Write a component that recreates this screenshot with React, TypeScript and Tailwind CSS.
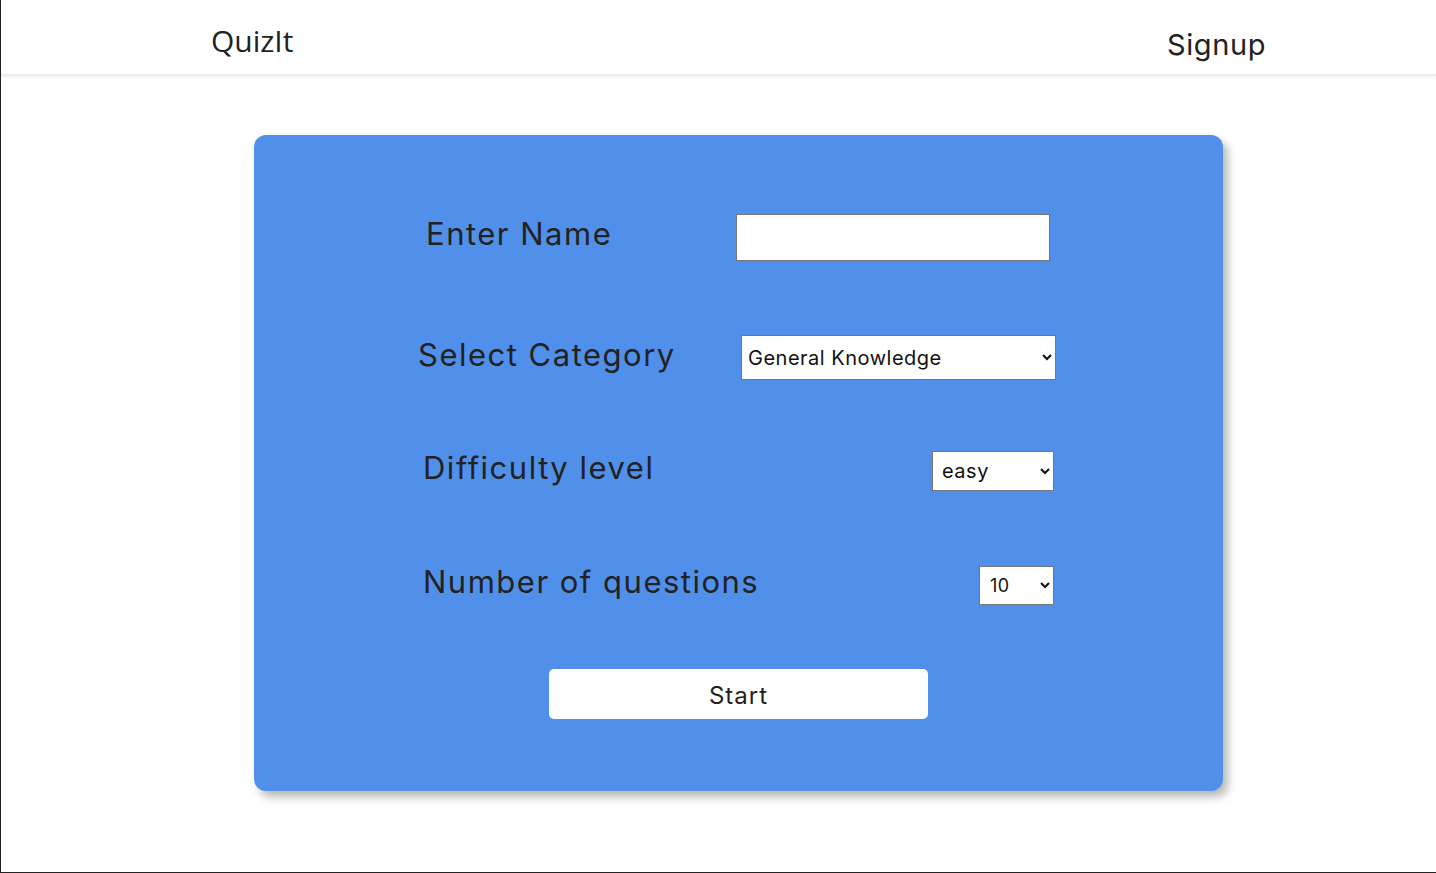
import { useState } from 'react';

const labelCls = 'text-[31px] text-[#222] tracking-[1.5px] leading-none';
const fieldCls = 'bg-white border border-[#767676] text-[#111] outline-none tracking-[0.5px]';

const App: React.FC = () => {
  const [name, setName] = useState('');
  const [category, setCategory] = useState('General Knowledge');
  const [difficulty, setDifficulty] = useState('easy');
  const [amount, setAmount] = useState('10');

  return (
    <div
      className="h-[873px] w-full bg-white border-l border-b border-[#222] overflow-hidden"
      style={{ fontFamily: 'Inter, "Open Sans", sans-serif' }}
    >
      {/* Header */}
      <header className="h-[75px] bg-white shadow-[0_2px_3px_rgba(0,0,0,0.08)] border-b border-[#ececec] flex items-center">
        <h1
          className="ml-[210px] mt-[6px] text-[30px] text-[#222] font-medium"
          style={{ fontFamily: '"Open Sans", sans-serif' }}
        >
          QuizIt
        </h1>
        <a href="#signup" className="ml-auto mr-[170px] mt-[16px] text-[29px] text-[#222] tracking-[0.6px]">
          Signup
        </a>
      </header>

      {/* Quiz setup card */}
      <main className="pt-[60px] pl-[253px]">
        <div className="w-[969px] h-[656px] bg-[#5190EA] rounded-[12px] shadow-[5px_6px_8px_rgba(0,0,0,0.28)] pt-[79px] flex flex-col">
          <div className="flex items-center justify-between pl-[172px] pr-[173px]">
            <span className={`${labelCls} -mt-[8px]`}>Enter Name</span>
            <input
              value={name}
              onChange={(e) => setName(e.target.value)}
              className={`${fieldCls} w-[314px] h-[47px] px-2 text-[20px]`}
            />
          </div>

          <div className="mt-[74px] flex items-center justify-between pl-[164px] pr-[167px]">
            <span className={`${labelCls} -mt-[6px]`}>Select Category</span>
            <select
              value={category}
              onChange={(e) => setCategory(e.target.value)}
              className={`${fieldCls} w-[315px] h-[45px] pl-[2px] text-[20px]`}
            >
              <option>General Knowledge</option>
              <option>Science</option>
              <option>History</option>
              <option>Sports</option>
            </select>
          </div>

          <div className="mt-[71px] flex items-center justify-between pl-[169px] pr-[169px]">
            <span className={`${labelCls} -mt-[8px]`}>Difficulty level</span>
            <select
              value={difficulty}
              onChange={(e) => setDifficulty(e.target.value)}
              className={`${fieldCls} w-[122px] h-[40px] pl-[5px] text-[20px]`}
            >
              <option>easy</option>
              <option>medium</option>
              <option>hard</option>
            </select>
          </div>

          <div className="mt-[75px] flex items-center justify-between pl-[169px] pr-[169px]">
            <span className={`${labelCls} -mt-[8px]`}>Number of questions</span>
            <select
              value={amount}
              onChange={(e) => setAmount(e.target.value)}
              className={`${fieldCls} w-[75px] h-[39px] pl-[6px] text-[18px]`}
            >
              <option>10</option>
              <option>15</option>
              <option>20</option>
            </select>
          </div>

          <div className="mt-[64px] pl-[295px]">
            <button className="w-[379px] h-[50px] bg-white rounded-[5px] text-[24px] tracking-[1px] text-[#222] pt-[4px]">
              Start
            </button>
          </div>
        </div>
      </main>
    </div>
  );
};

export default App;
